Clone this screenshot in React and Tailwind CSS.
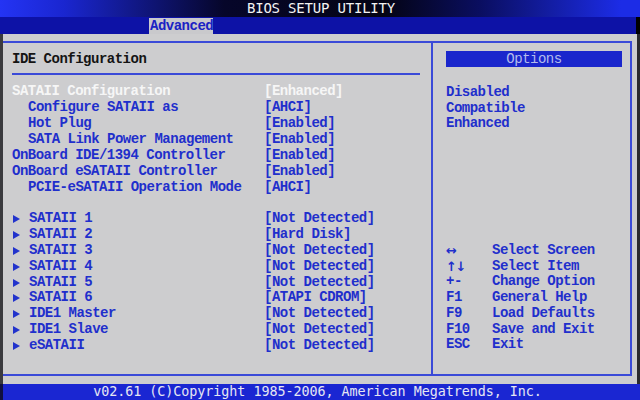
import React from 'react';

const topRows = [
    { label: 'SATAII Configuration', value: '[Enhanced]', indent: false, active: true },
    { label: 'Configure SATAII as', value: '[AHCI]', indent: true },
    { label: 'Hot Plug', value: '[Enabled]', indent: true },
    { label: 'SATA Link Power Management', value: '[Enabled]', indent: true },
    { label: 'OnBoard IDE/1394 Controller', value: '[Enabled]', indent: false },
    { label: 'OnBoard eSATAII Controller', value: '[Enabled]', indent: false },
    { label: 'PCIE-eSATAII Operation Mode', value: '[AHCI]', indent: true },
];

const drives = [
    { label: 'SATAII 1', value: '[Not Detected]' },
    { label: 'SATAII 2', value: '[Hard Disk]' },
    { label: 'SATAII 3', value: '[Not Detected]' },
    { label: 'SATAII 4', value: '[Not Detected]' },
    { label: 'SATAII 5', value: '[Not Detected]' },
    { label: 'SATAII 6', value: '[ATAPI CDROM]' },
    { label: 'IDE1 Master', value: '[Not Detected]' },
    { label: 'IDE1 Slave', value: '[Not Detected]' },
    { label: 'eSATAII', value: '[Not Detected]' },
];

const keys = [
    { key: '↔', desc: 'Select Screen', small: true },
    { key: '↑↓', desc: 'Select Item', small: true },
    { key: '+-', desc: 'Change Option' },
    { key: 'F1', desc: 'General Help' },
    { key: 'F9', desc: 'Load Defaults' },
    { key: 'F10', desc: 'Save and Exit' },
    { key: 'ESC', desc: 'Exit' },
];

function Arrow() {
    return (
        <svg width="7" height="8" viewBox="0 0 7 8" className="shrink-0">
            <path d="M0 0 L7 4 L0 8 Z" fill="#2233cc" />
        </svg>
    );
}

export default function App() {
    return (
        <div className="w-[640px] h-[400px] bg-black flex flex-col overflow-hidden font-['Liberation_Mono','DejaVu_Sans_Mono',monospace] text-[14px] tracking-[-0.5px] font-bold">
            {/* title bar */}
            <div className="h-[17px] shrink-0 flex items-center justify-center bg-[linear-gradient(90deg,#2434f4_0%,#1a26d0_10%,#06062a_35%,#040414_60%,#0a0e60_75%,#1c2ce6_97%)]">
                <span className="text-[#f2f2f2] font-normal font-['DejaVu_Sans_Mono',monospace] text-[14px] tracking-[-0.2px] leading-[17px] pl-[2px]">BIOS SETUP UTILITY</span>
            </div>

            {/* tab bar */}
            <div className="h-[17px] shrink-0 flex items-end bg-[#0d12a6] pl-[149px] border-r-[4px] border-black">
                <div className="h-[16px] w-[64px] bg-[#c9c9cc] text-[#1a22c4] leading-[16px] pl-[1px]">Advanced</div>
            </div>

            {/* body */}
            <div className="flex-1 bg-[#cdcdcf] border-l-[3px] border-l-[#3a3a3e] border-r-[3px] border-r-[#2a2a2e] pt-[7px] pr-[5px]">
                <div className="h-[335px] flex border-t-2 border-b-2 border-r-2 border-[#3a4ad8]">
                    {/* left panel */}
                    <div className="w-[430px] shrink-0 border-r-2 border-[#3a4ad8] text-[#1f2fcc]">
                        <div className="pl-[9px] pt-[8px] leading-[16px] text-[#141414]">IDE Configuration</div>
                        <div className="ml-[9px] mr-[11px] mt-[6px] h-[2px] bg-[#3a4ad8]" />
                        <div className="mt-[8px]">
                            {topRows.map(row => (
                                <div key={row.label} className={`flex h-[16px] leading-[16px] pl-[9px] ${row.active ? 'text-[#f6f6f6]' : ''}`}>
                                    <span className={`w-[252px] shrink-0 whitespace-nowrap ${row.indent ? 'pl-[16px]' : ''}`}>{row.label}</span>
                                    <span className="whitespace-nowrap">{row.value}</span>
                                </div>
                            ))}
                        </div>
                        <div className="mt-[16px]">
                            {drives.map(row => (
                                <div key={row.label} className="flex h-[15.9px] leading-[15.9px] pl-[9px]">
                                    <span className="w-[252px] shrink-0 flex items-center whitespace-nowrap">
                                        <span className="w-[17px] flex items-center pl-[1px]"><Arrow /></span>
                                        {row.label}
                                    </span>
                                    <span className="whitespace-nowrap">{row.value}</span>
                                </div>
                            ))}
                        </div>
                    </div>

                    {/* right panel */}
                    <div className="flex-1 text-[#1f2fcc] pl-[13px]">
                        <div className="mt-[8px] w-[176px] h-[16px] bg-[#1a26cc] text-[#b4bcec] font-normal leading-[16px] text-center">Options</div>
                        <div className="mt-[17px]">
                            {['Disabled', 'Compatible', 'Enhanced'].map(opt => (
                                <div key={opt} className="h-[15.7px] leading-[16px]">{opt}</div>
                            ))}
                        </div>
                        <div className="mt-[112px]">
                            {keys.map(k => (
                                <div key={k.desc} className="flex items-center h-[15.7px] leading-[15.7px]">
                                    <span className={`w-[46px] shrink-0 ${k.small ? "font-['DejaVu_Sans',sans-serif] text-[13px] leading-[13px] tracking-[-1.5px]" : ''}`}>{k.key}</span>
                                    <span className="whitespace-nowrap">{k.desc}</span>
                                </div>
                            ))}
                        </div>
                    </div>
                </div>
            </div>

            {/* footer */}
            <div className="h-[16px] shrink-0 bg-[#1a26d2] border-l-[3px] border-[#101040] flex items-center justify-center">
                <span className="text-[#e6e6f2] font-normal font-['DejaVu_Sans_Mono',monospace] text-[13.4px] tracking-[-0.05px] leading-[16px] pr-[8px]">v02.61 (C)Copyright 1985-2006, American Megatrends, Inc.</span>
            </div>
        </div>
    );
}
